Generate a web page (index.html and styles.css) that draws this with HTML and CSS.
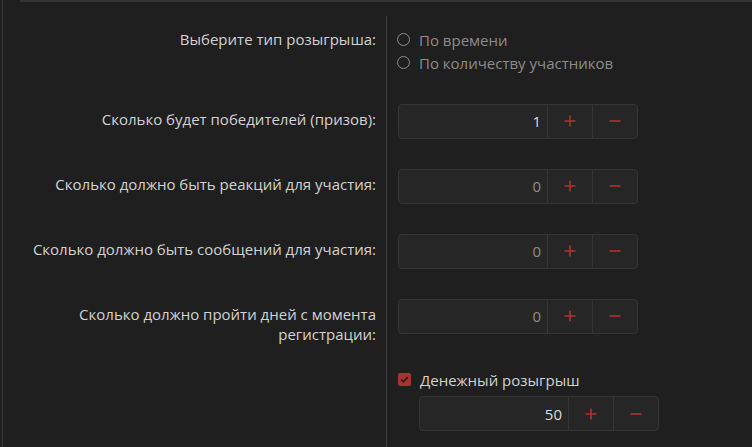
FILE: index.html
```html
<!DOCTYPE html>
<html lang="ru">
<head>
<meta charset="utf-8">
<link rel="stylesheet" href="styles.css">
</head>
<body>
<div class="frame">
  <div class="topline"></div>
  <div class="form">
    <div class="row row-radio">
      <div class="label"><span>Выберите тип розыгрыша:</span></div>
      <div class="control radios">
        <label class="radio"><span class="dot"></span>По времени</label>
        <label class="radio"><span class="dot"></span>По количеству участников</label>
      </div>
    </div>
    <div class="row">
      <div class="label"><span>Сколько будет победителей (призов):</span></div>
      <div class="control">
        <div class="spin"><div class="val active">1</div><div class="btn"><svg viewBox="0 0 12 12"><path d="M6 0.5V11.5M0.5 6H11.5"/></svg></div><div class="btn"><svg viewBox="0 0 12 12"><path d="M0.5 6H11.5"/></svg></div></div>
      </div>
    </div>
    <div class="row">
      <div class="label"><span>Сколько должно быть реакций для участия:</span></div>
      <div class="control">
        <div class="spin"><div class="val">0</div><div class="btn"><svg viewBox="0 0 12 12"><path d="M6 0.5V11.5M0.5 6H11.5"/></svg></div><div class="btn"><svg viewBox="0 0 12 12"><path d="M0.5 6H11.5"/></svg></div></div>
      </div>
    </div>
    <div class="row">
      <div class="label"><span>Сколько должно быть сообщений для участия:</span></div>
      <div class="control">
        <div class="spin"><div class="val">0</div><div class="btn"><svg viewBox="0 0 12 12"><path d="M6 0.5V11.5M0.5 6H11.5"/></svg></div><div class="btn"><svg viewBox="0 0 12 12"><path d="M0.5 6H11.5"/></svg></div></div>
      </div>
    </div>
    <div class="row">
      <div class="label"><span>Сколько должно пройти дней с момента<br>регистрации:</span></div>
      <div class="control">
        <div class="spin"><div class="val">0</div><div class="btn"><svg viewBox="0 0 12 12"><path d="M6 0.5V11.5M0.5 6H11.5"/></svg></div><div class="btn"><svg viewBox="0 0 12 12"><path d="M0.5 6H11.5"/></svg></div></div>
      </div>
    </div>
    <div class="row row-money">
      <div class="label"></div>
      <div class="control money">
        <label class="check"><span class="box"><svg viewBox="0 0 13 13"><path d="M3.2 6.6L5.4 8.8L9.8 4.2"/></svg></span>Денежный розыгрыш</label>
        <div class="spin sub"><div class="val active">50</div><div class="btn"><svg viewBox="0 0 12 12"><path d="M6 0.5V11.5M0.5 6H11.5"/></svg></div><div class="btn"><svg viewBox="0 0 12 12"><path d="M0.5 6H11.5"/></svg></div></div>
      </div>
    </div>
  </div>
</div>
</body>
</html>
```
FILE: styles.css
```css
html, body {
  margin: 0;
  padding: 0;
  background: #1f1f1f;
  height: 100%;
  overflow: hidden;
}
body {
  font-family: "Open Sans", "Noto Sans", sans-serif;
  font-size: 15px;
  color: #d2d2d2;
}
.frame {
  margin-left: 2px;
  border-left: 1px solid #3a3a3a;
  height: 447px;
}
.topline {
  margin-left: 17px;
  border-top: 2px solid #343434;
  height: 14px;
}
.form {
  display: flex;
  flex-direction: column;
}
.row {
  display: grid;
  grid-template-columns: 384px 1fr;
  height: 65px;
}
.label {
  border-right: 1px solid #3c3c3c;
  display: flex;
  justify-content: flex-end;
  align-items: flex-start;
  padding-top: 21px;
  padding-right: 10px;
  text-align: right;
  line-height: 20px;
}
.control {
  padding-left: 10px;
  display: flex;
  align-items: center;
}
.row-radio {
  height: 72px;
}
.row-radio .label {
  padding-top: 13px;
}
.radios {
  flex-direction: column;
  align-items: flex-start;
  padding-top: 12px;
}
.radio {
  display: flex;
  align-items: center;
  height: 23px;
  color: #8c8c8c;
}
.dot {
  width: 11px;
  height: 11px;
  border: 1.5px solid #8c8c8c;
  border-radius: 50%;
  margin-right: 9px;
}
.spin {
  display: flex;
  width: 238px;
  height: 33px;
  border: 1px solid #353535;
  border-radius: 4px;
  background: #262626;
  box-sizing: content-box;
  margin-left: 1px;
  margin-top: 1px;
}
.val {
  flex: 1;
  display: flex;
  align-items: center;
  justify-content: flex-end;
  padding-right: 6px;
  color: #8c8c8c;
}
.val.active {
  color: #dcdcdc;
}
.btn {
  width: 44px;
  border-left: 1px solid #353535;
  display: flex;
  align-items: center;
  justify-content: center;
}
.btn svg {
  width: 12px;
  height: 12px;
}
.btn svg path {
  stroke: #b5302f;
  stroke-width: 1.6;
  fill: none;
}
.row-money {
  height: 99px;
}
.money {
  flex-direction: column;
  align-items: flex-start;
  padding-top: 20px;
  justify-content: flex-start;
}
.check {
  display: flex;
  align-items: center;
  height: 23px;
  color: #d2d2d2;
  margin-left: 1px;
}
.box {
  width: 13px;
  height: 13px;
  background: #a83131;
  border-radius: 2px;
  margin-right: 9px;
  display: flex;
}
.box svg {
  width: 13px;
  height: 13px;
}
.box svg path {
  stroke: #2a1a1a;
  stroke-width: 1.8;
  fill: none;
}
.sub {
  margin-left: 22px;
  margin-top: 5px;
}
```
